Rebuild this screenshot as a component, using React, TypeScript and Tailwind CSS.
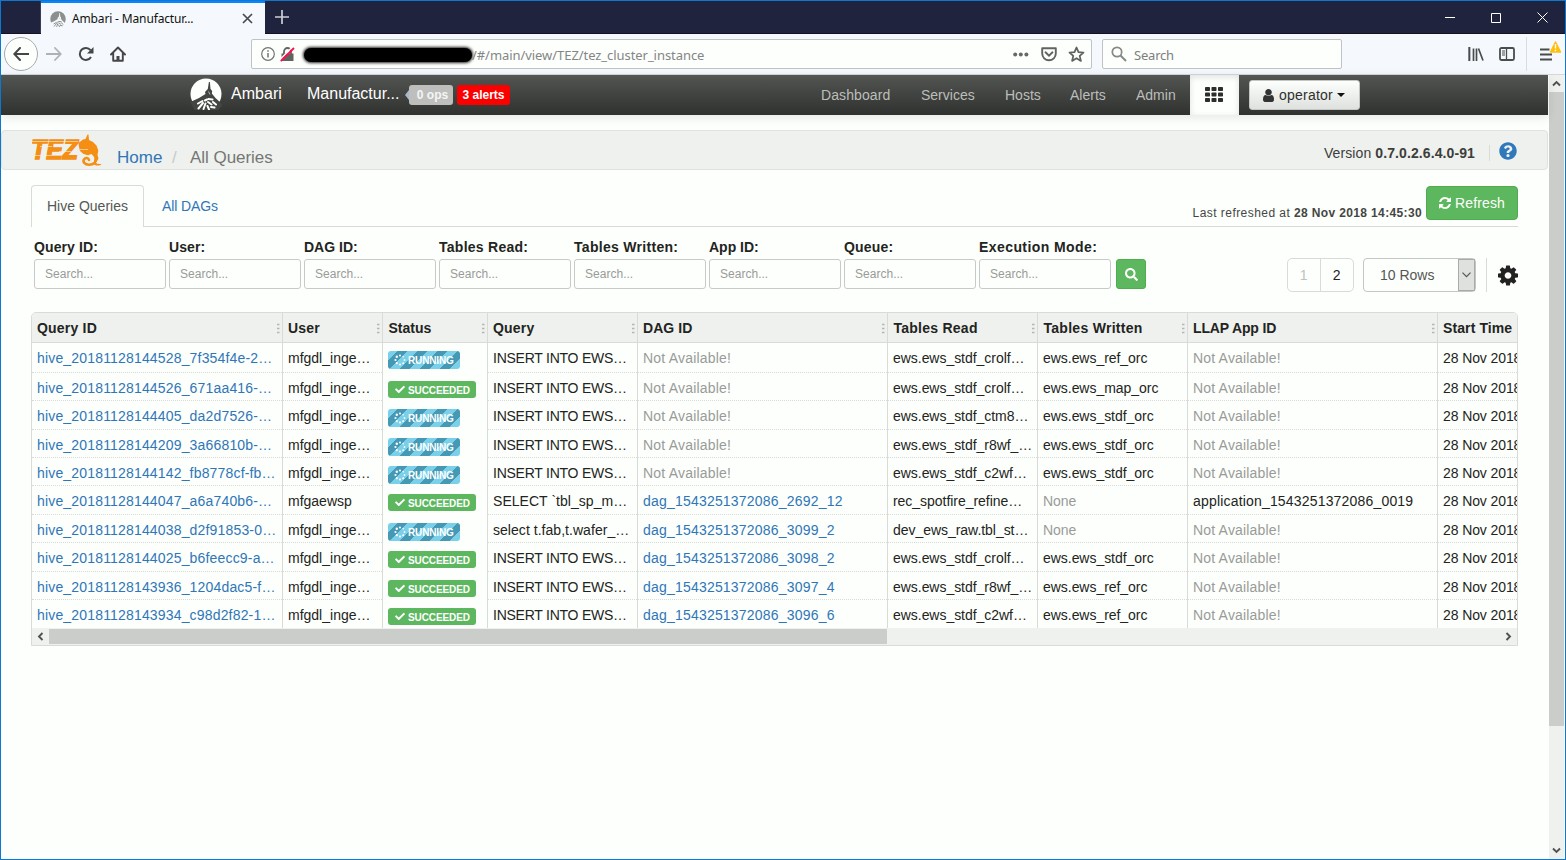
import React from "react";
import { FaCheck, FaQuestionCircle, FaSearch } from "react-icons/fa";

const COLS = [
  "w-[251px] tracking-[0.17px]",
  "w-[100px] tracking-[0px]",
  "w-[105px]",
  "w-[150px]",
  "w-[250px] tracking-[0.2px]",
  "w-[150px] tracking-[-0.04px]",
  "w-[150px] tracking-[-0.04px]",
  "w-[250px] tracking-[0.18px]",
  "w-[79px] tracking-[-0.1px]",
];

const HEADERS: [string, string][] = [
  ["Query ID", "w-[251px] tracking-[0.2px]"],
  ["User", "w-[100px] tracking-[0.2px]"],
  ["Status", "w-[105px] tracking-[0px]"],
  ["Query", "w-[150px] tracking-[0.2px]"],
  ["DAG ID", "w-[250px] tracking-[0.05px]"],
  ["Tables Read", "w-[150px] tracking-[0.25px]"],
  ["Tables Written", "w-[150px] tracking-[0.28px]"],
  ["LLAP App ID", "w-[250px] tracking-[-0.15px]"],
  ["Start Time", "w-[79px] tracking-[0.1px]"],
];

type Row = {
  id: string;
  user: string;
  running: boolean;
  query: string;
  dag?: string;
  read: string;
  written?: string;
  app?: string;
  h: string;
};

const INGE = "mfgdl_inge…";
const INSERT = "INSERT INTO EWS…";

const ROWS: Row[] = [
  { id: "hive_20181128144528_7f354f4e-2…", user: INGE, running: true, query: INSERT, read: "ews.ews_stdf_crolf…", written: "ews.ews_ref_orc", h: "h-[30px]" },
  { id: "hive_20181128144526_671aa416-…", user: INGE, running: false, query: INSERT, read: "ews.ews_stdf_crolf…", written: "ews.ews_map_orc", h: "h-[28px]" },
  { id: "hive_20181128144405_da2d7526-…", user: INGE, running: true, query: INSERT, read: "ews.ews_stdf_ctm8…", written: "ews.ews_stdf_orc", h: "h-[29px]" },
  { id: "hive_20181128144209_3a66810b-…", user: INGE, running: true, query: INSERT, read: "ews.ews_stdf_r8wf_…", written: "ews.ews_stdf_orc", h: "h-[28px]" },
  { id: "hive_20181128144142_fb8778cf-fb…", user: INGE, running: true, query: INSERT, read: "ews.ews_stdf_c2wf…", written: "ews.ews_stdf_orc", h: "h-[28px]" },
  { id: "hive_20181128144047_a6a740b6-…", user: "mfgaewsp", running: false, query: "SELECT `tbl_sp_m…", dag: "dag_1543251372086_2692_12", read: "rec_spotfire_refine…", app: "application_1543251372086_0019", h: "h-[29px]" },
  { id: "hive_20181128144038_d2f91853-0…", user: INGE, running: true, query: "select t.fab,t.wafer_…", dag: "dag_1543251372086_3099_2", read: "dev_ews_raw.tbl_st…", h: "h-[28px]" },
  { id: "hive_20181128144025_b6feecc9-a…", user: INGE, running: false, query: INSERT, dag: "dag_1543251372086_3098_2", read: "ews.ews_stdf_crolf…", written: "ews.ews_stdf_orc", h: "h-[29px]" },
  { id: "hive_20181128143936_1204dac5-f…", user: INGE, running: false, query: INSERT, dag: "dag_1543251372086_3097_4", read: "ews.ews_stdf_r8wf_…", written: "ews.ews_ref_orc", h: "h-[28px]" },
  { id: "hive_20181128143934_c98d2f82-1…", user: INGE, running: false, query: INSERT, dag: "dag_1543251372086_3096_6", read: "ews.ews_stdf_c2wf…", written: "ews.ews_ref_orc", h: "h-[28px]" },
];

const FILTERS: [string, string][] = [
  ["Query ID:", "tracking-[0.1px]"],
  ["User:", "tracking-[0.1px]"],
  ["DAG ID:", "tracking-[0px]"],
  ["Tables Read:", "tracking-[0.26px]"],
  ["Tables Written:", "tracking-[0.3px]"],
  ["App ID:", "tracking-[0px]"],
  ["Queue:", "tracking-[0.2px]"],
  ["Execution Mode:", "tracking-[0.42px]"],
];

function AmbariMark({ size, disc, ink }: { size: number; disc: string; ink: string }) {
  return (
    <svg width={size} height={size} viewBox="0 0 32 32" className="shrink-0">
      <circle cx="16" cy="16" r="15.500" fill={disc} />
      <path d="M18.900 4h1l.6 7 1.700 2-.4 2.500 3.700 4.500 7.500 7-6 6H5l-5-9 2.500-1L9 20l6.500-4-.5-2 2.800-3z" fill={ink} />
      <path d="M18.500 13.500l1.500 3" stroke={disc} strokeWidth="0.600" />
      <path d="M8 25.500l4.500-2.500M8.500 30.500l4.500-5.500M13.500 31l2-5.500M15 22.500l2-1M18.500 21l4 .5M18 24l3.500 2.500M17.500 28l1.500 3.500M21 29l3.500.5M23 24l3 2.500" stroke={disc} strokeWidth="2" fill="none" strokeLinecap="round" />
    </svg>
  );
}

function TezLogo() {
  return (
    <svg width="72" height="34" viewBox="0 0 72 34" className="shrink-0">
      <text x="-1" y="24.500" fontFamily="Liberation Sans, sans-serif" fontWeight="bold" fontStyle="italic" fontSize="27" textLength="47" lengthAdjust="spacingAndGlyphs" fill="#f58f14" stroke="#f58f14" strokeWidth="1.500">
        TEZ
      </text>
      <path d="M0 7.500h46M8 12.500h12M27 17.500h12M0 21.500h30" stroke="#eff1ee" strokeWidth="0.600" />
      <path d="M46.500 9L51 5.500l2.500-.5L55.500.5l1 0 .5 5.500 4 2 3.500 3.500 1.800 5-.8 4.500 1 3.500-2 3.500-2.500-1 .5-3.500-3-3.500-3.500 1.200-4.500-1.200-3.500-3L47 13z" fill="#f58f14" />
      <path d="M63.500 22c2 6-2 8.700-6.500 8.700s-6.500-3-5-5.200 4.500-1.800 5 .5" fill="none" stroke="#f58f14" strokeWidth="2.600" strokeLinecap="round" />
      <path d="M63 27c1 3 3 3 6.500 3-1 1.500-5 2.500-7.500.5z" fill="#f58f14" />
      <path d="M48 15.500h8" stroke="#eff1ee" strokeWidth="0.600" fill="none" />
    </svg>
  );
}

function Cog() {
  return (
    <svg width="20" height="21" viewBox="0 0 1536 1536" fill="#222">
      <path d="M1024 768q0-106-75-181t-181-75-181 75-75 181 75 181 181 75 181-75 75-181zm512-109v222q0 12-8 23t-20 13l-185 28q-19 54-39 91 35 50 107 138 10 12 10 25t-9 23q-27 37-99 108t-94 71q-12 0-26-9l-138-108q-44 23-91 38-16 136-29 186-7 28-36 28h-222q-14 0-24.500-8.500t-11.500-21.500l-28-184q-49-16-90-37l-141 107q-10 9-25 9-14 0-25-11-126-114-165-168-7-10-7-23 0-12 8-23 15-21 51-66.500t54-70.500q-27-50-41-99l-183-27q-13-2-21-12.500t-8-23.500v-222q0-12 8-23t19-13l186-28q14-46 39-92-40-57-107-138-10-12-10-24 0-10 9-23 26-36 98.500-107.500t94.500-71.500q13 0 26 10l138 107q44-23 91-38 16-136 29-186 7-28 36-28h222q14 0 24.500 8.500t11.500 21.500l28 184q49 16 90 37l142-107q9-9 24-9 13 0 25 10 129 119 165 170 7 8 7 22 0 12-8 23-15 21-51 66.500t-54 70.500q26 50 41 98l183 28q13 2 21 12.500t8 23.500z" />
    </svg>
  );
}

function RefreshIcon() {
  return (
    <svg width="12" height="12" viewBox="0 0 1536 1536" fill="currentColor">
      <path d="M1511 928q0 5-1 7-64 268-268 434.500t-478 166.500q-146 0-282.500-55t-243.500-157l-129 129q-19 19-45 19t-45-19-19-45v-448q0-26 19-45t45-19h448q26 0 45 19t19 45-19 45l-137 137q71 66 161 102t187 36q134 0 250-65t186-179q11-17 53-117 8-23 30-23h192q13 0 22.500 9.500t9.500 22.500zm25-800v448q0 26-19 45t-45 19h-448q-26 0-45-19t-19-45 19-45l138-138q-148-137-349-137-134 0-250 65t-186 179q-11 17-53 117-8 23-30 23h-199q-13 0-22.500-9.500t-9.500-22.500v-7q65-268 270-434.500t480-166.500q146 0 284 55.500t245 156.500l130-129q19-19 45-19t45 19 19 45z" />
    </svg>
  );
}

function UserIcon() {
  return (
    <svg width="11" height="13" viewBox="0 0 1280 1536" fill="#333" preserveAspectRatio="none">
      <path d="M1280 1271q0 109-62.500 187t-150.500 78h-854q-88 0-150.500-78t-62.500-187q0-85 8.500-160.500t31.500-152 58.500-131 94-89 134.500-34.500q131 128 313 128t313-128q76 0 134.500 34.500t94 89 58.500 131 31.500 152 8.500 160.500zm-256-887q0 159-112.500 271.500t-271.500 112.500-271.500-112.500-112.500-271.500 112.500-271.500 271.500-112.500 271.500 112.500 112.500 271.500z" />
    </svg>
  );
}

function SpinnerDots() {
  return (
    <svg width="12" height="12" viewBox="0 0 12 12" fill="#fff" className="mr-[2px] shrink-0">
      <circle cx="6" cy="1.500" r="1.100" />
      <circle cx="9.200" cy="2.800" r="0.800" />
      <circle cx="10.500" cy="6" r="0.900" />
      <circle cx="9.200" cy="9.200" r="1" />
      <circle cx="6" cy="10.500" r="1.100" />
      <circle cx="2.800" cy="9.200" r="1.100" />
      <circle cx="1.500" cy="6" r="1.100" />
      <circle cx="2.800" cy="2.800" r="1.200" />
    </svg>
  );
}

function Chevron({ d }: { d: string }) {
  return (
    <svg width="9" height="9" viewBox="0 0 9 9">
      <path d={d} fill="none" stroke="#505250" strokeWidth="1.900" />
    </svg>
  );
}

function TitleBar() {
  return (
    <div className="flex h-[33px] shrink-0 border-b border-[#170f26] bg-[#20233e]">
      <div className="w-[40px] shrink-0 border-r border-[#3a3d58]" />
      <div className="flex h-[33px] w-[224px] shrink-0 items-center border-t-2 border-[#0a84ff] bg-[#f5f9fd] pl-[9px]">
        <AmbariMark size={16} disc="#8d8f8c" ink="#f5f9fd" />
        <span className="ml-[6px] w-[170px] font-['Noto_Sans'] text-[12px] tracking-[-0.15px] text-[#111]">Ambari - Manufactur...</span>
        <svg width="11" height="11" viewBox="0 0 11 11">
          <path d="M1 1l9 9M10 1l-9 9" stroke="#4a4a4f" strokeWidth="1.700" />
        </svg>
      </div>
      <svg width="14" height="14" viewBox="0 0 14 14" className="mt-[9px] ml-[10px]">
        <path d="M7 0v14M0 7h14" stroke="#cdced5" strokeWidth="1.700" />
      </svg>
      <div className="ml-auto flex items-center gap-[35px] pr-[17px]">
        <svg width="11" height="11" viewBox="0 0 11 11"><path d="M0 5.500h10" stroke="#fff" /></svg>
        <svg width="11" height="11" viewBox="0 0 11 11"><path d="M.5 1.500h9v9h-9z" stroke="#fff" fill="none" /></svg>
        <svg width="11" height="11" viewBox="0 0 11 11"><path d="M.5.5l10 10M10.500.5l-10 10" stroke="#fff" fill="none" /></svg>
      </div>
    </div>
  );
}

function ToolBar() {
  return (
    <div className="flex h-[41px] shrink-0 items-center border-b border-[#d4d8da] bg-[#f5f9fd]">
      <div className="ml-[3px] flex h-[34px] w-[34px] items-center justify-center rounded-full border border-[#a9abaa] bg-[#fdfffc]">
        <svg width="16" height="14" viewBox="0 0 16 14"><path d="M15.500 7H1.500M7 1L1.300 7 7 13" fill="none" stroke="#444647" strokeWidth="2" strokeLinecap="round" /></svg>
      </div>
      <svg width="16" height="14" viewBox="0 0 16 14" className="ml-[8px]"><path d="M.5 7h14M9 1l5.700 6L9 13" fill="none" stroke="#aeb2b4" strokeWidth="1.800" strokeLinecap="round" /></svg>
      <svg width="16" height="16" viewBox="0 0 16 16" className="ml-[16px]"><path d="M13 11A6 6 0 1 1 12.500 4.200" fill="none" stroke="#444647" strokeWidth="2" /><path d="M15.500 1v6.500H9z" fill="#444647" /></svg>
      <svg width="16" height="16" viewBox="0 0 16 16" className="ml-[16px]"><path d="M1 8.500L8 1.500l7 7M3.200 7v7.800h9.600V7" fill="none" stroke="#444647" strokeWidth="1.900" strokeLinejoin="round" strokeLinecap="round" /><path d="M6.500 10h3v5h-3z" fill="#444647" /></svg>
      <div className="ml-[125px] flex h-[30px] w-[841px] items-center rounded-[2px] border border-[#c0c3c3] bg-[#fdfffc]">
        <svg width="14" height="14" viewBox="0 0 14 14" className="ml-[9px]"><circle cx="7" cy="7" r="6.300" fill="none" stroke="#737573" strokeWidth="1.200" /><path d="M7 6v4.500M7 3.300v1.500" stroke="#737573" strokeWidth="1.500" /></svg>
        <svg width="15" height="15" viewBox="0 0 15 15" className="ml-[5px]"><path d="M4 7V4.500a3.500 3.500 0 0 1 7 0V7" fill="none" stroke="#616361" strokeWidth="1.800" /><path d="M1.500 6.500h12V14h-12z" fill="#616361" /><path d="M-1 13.500L12.500 0" stroke="#fdfffc" strokeWidth="1.500" /><path d="M.8 14.200L14 1" stroke="#ff0e4e" strokeWidth="1.900" /></svg>
        <div className="mt-[2px] ml-[9px] h-[14px] w-[168px] rounded-full bg-black shadow-[0_0_3px_1px_#222]" />
        <span className="mt-[3px] font-['Noto_Sans'] text-[13px] tracking-[-0.06px] text-[#848685]">/#/main/view/TEZ/tez_cluster_instance</span>
        <div className="ml-auto flex items-center pr-[6px]">
          <svg width="16" height="5" viewBox="0 0 16 5"><circle cx="2.200" cy="2.500" r="2" fill="#666866" /><circle cx="7.800" cy="2.500" r="2" fill="#666866" /><circle cx="13.400" cy="2.500" r="2" fill="#666866" /></svg>
          <svg width="16" height="16" viewBox="0 0 16 16" className="ml-[12px]"><path d="M1.200 2.200h13.600v5.300a6.800 6.800 0 0 1-13.600 0z" fill="none" stroke="#616361" strokeWidth="1.900" strokeLinejoin="round" /><path d="M4.500 6.300L8 9.700l3.500-3.400" fill="none" stroke="#616361" strokeWidth="1.900" strokeLinecap="round" /></svg>
          <svg width="17" height="17" viewBox="0 0 17 17" className="ml-[11px]"><path d="M8.500 1.500l2 4.700 5 .4-3.800 3.300 1.200 5-4.400-2.700-4.400 2.700 1.200-5L1.500 6.600l5-.4z" fill="none" stroke="#616361" strokeWidth="1.800" strokeLinejoin="round" /></svg>
        </div>
      </div>
      <div className="ml-[10px] flex h-[30px] w-[240px] items-center rounded-[2px] border border-[#c0c3c3] bg-[#fdfffc] pl-[8px]">
        <svg width="16" height="16" viewBox="0 0 16 16"><circle cx="6" cy="6" r="4.700" fill="none" stroke="#868886" strokeWidth="1.700" /><path d="M9.500 9.500l5.500 5.500" stroke="#868886" strokeWidth="1.900" /></svg>
        <span className="mt-[3px] ml-[7px] font-['Noto_Sans'] text-[13px] tracking-[-0.2px] text-[#7c7e7d]">Search</span>
      </div>
      <div className="ml-auto flex items-center">
        <svg width="16" height="14" viewBox="0 0 16 14"><path d="M1.500 0v14M5.500 1.500v12.500M8.500 1.500v12.500M10.500 1.500l4.500 12" stroke="#4a4c4c" strokeWidth="1.700" fill="none" /><path d="M1 0v14" stroke="#4a4c4c" /></svg>
        <svg width="16" height="14" viewBox="0 0 16 14" className="ml-[15px]"><rect x="1" y="1" width="14" height="12" rx="1.500" fill="none" stroke="#4a4c4c" strokeWidth="1.800" /><path d="M7.500 1v12" stroke="#4a4c4c" strokeWidth="1.300" /><path d="M3 4h3M3 6h3M3 8h3" stroke="#4a4c4c" /></svg>
        <div className="ml-[11px] h-[34px] w-px bg-[#d9dddf]" />
        <svg width="27" height="28" viewBox="0 0 27 28" className="ml-[11px]"><path d="M2 9.500h9.500M2 14.500h12M2 19.500h12" stroke="#4a4c4c" strokeWidth="1.900" /><path d="M17.500 2L22.500 12H12.500z" fill="#ffbf0a" stroke="#ffbf0a" strokeWidth="1.500" strokeLinejoin="round" /><path d="M17.500 4v4.500M17.500 9.800v1.500" stroke="#fff" strokeWidth="1.400" /></svg>
      </div>
    </div>
  );
}

function NavBar() {
  return (
    <div className="relative flex h-10 shrink-0 items-center bg-gradient-to-b from-[#535552] to-[#30322f] shadow-[0_2px_10px_rgba(0,0,0,0.1)]">
      <div className="mt-[-3px] ml-[189px]"><AmbariMark size={32} disc="#fdfffc" ink="#434543" /></div>
      <span className="mt-[-3px] ml-[9px] w-[76px] text-[16px] tracking-[0.05px] text-white">Ambari</span>
      <span className="mt-[-3px] w-[98px] text-[16px] tracking-[0px] text-white">Manufactur...</span>
      <svg width="4" height="10" viewBox="0 0 4 10"><path d="M4 0v10L0 5z" fill="#a9b9ca" /></svg>
      <span className="flex h-5 w-11 items-center justify-center rounded-[3px] bg-[#bebfbd] pl-[3px] text-[12px] font-bold text-[#f4f6f3]">0 ops</span>
      <span className="ml-1 flex h-5 w-[53px] items-center justify-center rounded-[3px] bg-[#fc0000] text-[12px] font-bold text-white">3 alerts</span>
      <div className="ml-auto flex h-full items-center text-[14px] tracking-[0.1px] text-[#bcbebb]">
        <span className="w-[100px]">Dashboard</span>
        <span className="w-[84px] tracking-[0px]">Services</span>
        <span className="w-[65px] tracking-[0px]">Hosts</span>
        <span className="w-[66px] tracking-[0px]">Alerts</span>
        <span className="w-[54px] tracking-[0px]">Admin</span>
      </div>
      <div className="flex h-full w-[49px] justify-center bg-[#fdfffc] pt-[12px] shadow-[inset_0_2px_6px_rgba(0,0,0,0.12)]">
        <svg width="18" height="15" viewBox="0 0 18 15" className="mr-px" fill="#2c2e2b">
          {[0, 6.500, 13].map((x) => [0, 5.500, 11].map((y) => <rect key={`${x}-${y}`} x={x} y={y} width="5" height="4" rx="0.800" />))}
        </svg>
      </div>
      <div className="mr-[188px] ml-[10px] flex h-[30px] w-[111px] items-center rounded-[3px] border border-[#c4c6c3] bg-gradient-to-b from-[#fdfffc] to-[#dfe1de] pl-[13px] text-[#2e302d]">
        <UserIcon />
        <span className="ml-[5px] text-[14px] tracking-[0.22px]">operator</span>
        <svg width="8" height="4" viewBox="0 0 8 4" className="ml-[4px]"><path d="M0 0h8L4 4z" fill="#111" /></svg>
      </div>
    </div>
  );
}

function BreadcrumbBar() {
  return (
    <div className="mt-[15px] flex h-10 shrink-0 rounded-[4px] border border-[#e0e2df] bg-[#eff1ee] text-[14px]">
      <div className="mt-[3px] ml-[30px]"><TezLogo /></div>
      <div className="mt-[16px] ml-[13px] flex text-[17px] leading-[22px]">
        <span className="w-[55px] text-[#2f76b8]">Home</span>
        <span className="w-[18px] text-[#c8cac7]">/</span>
        <span className="tracking-[-0.04px] text-[#757774]">All Queries</span>
      </div>
      <div className="mt-[12px] mr-[30px] ml-auto flex leading-[20px] text-[#3c3e3b]">
        <span className="tracking-[0.1px]">Version <b>0.7.0.2.6.4.0-91</b></span>
        <div className="mt-[2px] mr-[9px] ml-[14px] h-4 w-px bg-[#d9dbd8]" />
        <FaQuestionCircle className="mt-[-1px] h-[18px] w-[18px] text-[#2f79bb]" />
      </div>
    </div>
  );
}

function Tabs() {
  return (
    <div className="mt-[15px] flex h-[42px] shrink-0 border-b border-[#d9dbd8] text-[14px]">
      <div className="flex h-[42px] w-[113px] items-center justify-center rounded-t-[4px] border border-b-0 border-[#d9dbd8] bg-[#fdfffc] tracking-[0.02px] text-[#555754]">Hive Queries</div>
      <span className="mt-[10px] ml-[18px] leading-[22px] tracking-[-0.1px] text-[#2f76b8]">All DAGs</span>
      <span className="mt-[18px] ml-auto text-[12px] leading-5 tracking-[0.45px] text-[#444643]">Last refreshed at <b className="tracking-[0.36px]">28 Nov 2018 14:45:30</b></span>
      <div className="mt-px ml-1 flex h-[34px] w-[92px] items-center justify-center gap-1 rounded-[4px] border border-[#4cae4c] bg-[#5db75f] tracking-[0.15px] text-[#fdfffc]">
        <RefreshIcon />
        Refresh
      </div>
    </div>
  );
}

function FilterRow() {
  return (
    <div className="mt-[10px] flex h-[53px] shrink-0 pl-[3px]">
      {FILTERS.map(([label, tracking]) => (
        <div key={label} className="mr-[3px] w-[132px]">
          <div className={`${tracking} h-[22px] text-[14px] leading-[20px] font-bold whitespace-nowrap text-[#222421]`}>{label}</div>
          <div className="h-[30px] rounded-[3px] border border-[#c8cac7] pl-[10px] text-[12px] leading-[28px] tracking-[0.02px] text-[#999b98]">Search...</div>
        </div>
      ))}
      <div className="mt-[22px] ml-[2px] flex h-[30px] w-[30px] items-center justify-center rounded-[3px] border border-[#4cae4c] bg-[#5db75f]">
        <FaSearch className="h-[13px] w-[13px] text-white" />
      </div>
      <div className="mt-[21px] ml-auto flex h-[34px] items-center text-[14px]">
        <div className="flex h-[34px] w-[67px] rounded-[5px] border border-[#d9dbd8] text-center leading-[32px]">
          <span className="w-[33px] border-r border-[#d9dbd8] text-[#c0c2bf]">1</span>
          <span className="w-[33px] text-[#222]">2</span>
        </div>
        <div className="ml-[9px] flex h-[34px] w-[113px] rounded-[4px] border border-[#c4c6c3] leading-[32px] text-[#555754]">
          <span className="w-[94px] pl-[16px] tracking-[0px]">10 Rows</span>
          <span className="flex w-[17px] items-center justify-center border border-[#a9aba8] bg-[#dfe1de]">
            <svg width="9" height="6" viewBox="0 0 9 6"><path d="M.5.7l4 4 4-4" fill="none" stroke="#555" strokeWidth="1.200" /></svg>
          </span>
        </div>
        <div className="mr-[11px] ml-[10px] h-[34px] w-px bg-[#d9dbd8]" />
        <Cog />
      </div>
    </div>
  );
}

function Status({ running }: { running: boolean }) {
  return running ? (
    <span className="mt-[8px] flex h-[18px] w-[72px] items-center rounded-[3px] bg-[repeating-linear-gradient(135deg,#7acfe9_0px,#7acfe9_7.07px,#4599b5_7.070px,#4599b5_14.140px)] pl-[6px] text-[10px] leading-[17px] font-bold tracking-[-0.15px] text-white">
      <SpinnerDots />
      <span className="h-[16px]">RUNNING</span>
    </span>
  ) : (
    <span className="mt-[8px] flex h-[17px] w-[88px] items-center rounded-[3px] bg-[#5db75f] pl-[7px] text-[10px] leading-[17px] font-bold tracking-[-0.1px] text-white">
      <FaCheck className="mr-[3px] h-[11px] w-[10px]" />
      <span className="h-[16px]">SUCCEEDED</span>
    </span>
  );
}

function QueryTable() {
  const link = "text-[#2f76b8]";
  const dark = "text-[#222421]";
  const dim = "text-[#999b98]";
  return (
    <div className="w-[1487px] shrink-0 overflow-hidden rounded-t-[5px] border border-[#d9dbd8]">
      <div className="flex h-[30px] border-b border-[#d9dbd8] bg-[#eff1ee]">
        {HEADERS.map(([h, cls], i) => (
          <div key={h} className={`${cls} flex shrink-0 items-center justify-between border-[#d9dbd8] text-[14px] font-bold whitespace-nowrap text-[#222421] ${i < 8 ? "border-r" : ""} ${i === 2 || i === 5 || i === 6 ? "pl-[5.5px]" : "pl-[5px]"}`}>
            <span className="pt-[2px]">{h}</span>
            {i < 8 && (
              <svg width="3" height="12" viewBox="0 0 3 12" className="mt-[3px] mr-[2px]">
                <path d="M0 1.500h2.500M0 5.500h2.500M0 9.500h2.500" stroke="#b4b6b3" strokeWidth="1.400" />
              </svg>
            )}
          </div>
        ))}
      </div>
      {ROWS.map((r, ri) => {
        const cells: [React.ReactNode, string][] = [
          [r.id, link],
          [r.user, dark],
          [<Status running={r.running} />, ""],
          [r.query, r.query === INSERT ? `${dark} tracking-[-0.24px]` : `${dark} tracking-[0.04px]`],
          [r.dag ?? "Not Available!", r.dag ? link : dim],
          [r.read, dark],
          [r.written ?? "None", r.written ? dark : dim],
          [r.app ?? "Not Available!", r.app ? dark : dim],
          ["28 Nov 2018", dark],
        ];
        return (
          <div key={r.id} className={`${r.h} flex`}>
            {cells.map(([c, color], i) => (
              <div key={i} className={`${COLS[i]} ${color} shrink-0 overflow-hidden border-[#d9dbd8] ${i < 8 ? "border-r" : ""}`}>
                <div className={`h-full border-[#d9dbd8] pl-[5px] text-[14px] leading-[30px] whitespace-nowrap ${ri < 9 ? "border-b border-dotted" : ""}`}>{c}</div>
              </div>
            ))}
          </div>
        );
      })}
      <div className="flex h-[17px] items-center bg-[#eff1ee] pb-px pl-[4px]">
        <Chevron d="M6.500 1L3 4.500 6.500 8" />
        <div className="ml-1 h-[15px] w-[838px] bg-[#cbcdca]" />
        <div className="mr-[4px] ml-auto flex"><Chevron d="M2.500 1L6 4.500 2.500 8" /></div>
      </div>
    </div>
  );
}

export default function App() {
  return (
    <div className="flex h-[860px] w-[1566px] flex-col overflow-hidden border border-[#0d78d0] bg-[#fdfffc] font-['Liberation_Sans',sans-serif]">
      <TitleBar />
      <ToolBar />
      <div className="flex min-h-0 flex-1">
        <div className="flex w-[1547px] shrink-0 flex-col">
          <NavBar />
          <BreadcrumbBar />
          <div className="flex flex-col pr-[30px] pl-[30px]">
            <Tabs />
            <FilterRow />
            <div className="mt-[22px]"><QueryTable /></div>
          </div>
        </div>
        <div className="ml-px flex w-[15px] flex-col items-center bg-[#eff1ee] pt-[4px]">
          <Chevron d="M1 6.500L4.500 3 8 6.500" />
          <div className="mt-[4px] h-[634px] w-full bg-[#cbcdca]" />
          <div className="mt-auto mb-[4px]"><Chevron d="M1 2.500L4.500 6 8 2.500" /></div>
        </div>
      </div>
    </div>
  );
}
